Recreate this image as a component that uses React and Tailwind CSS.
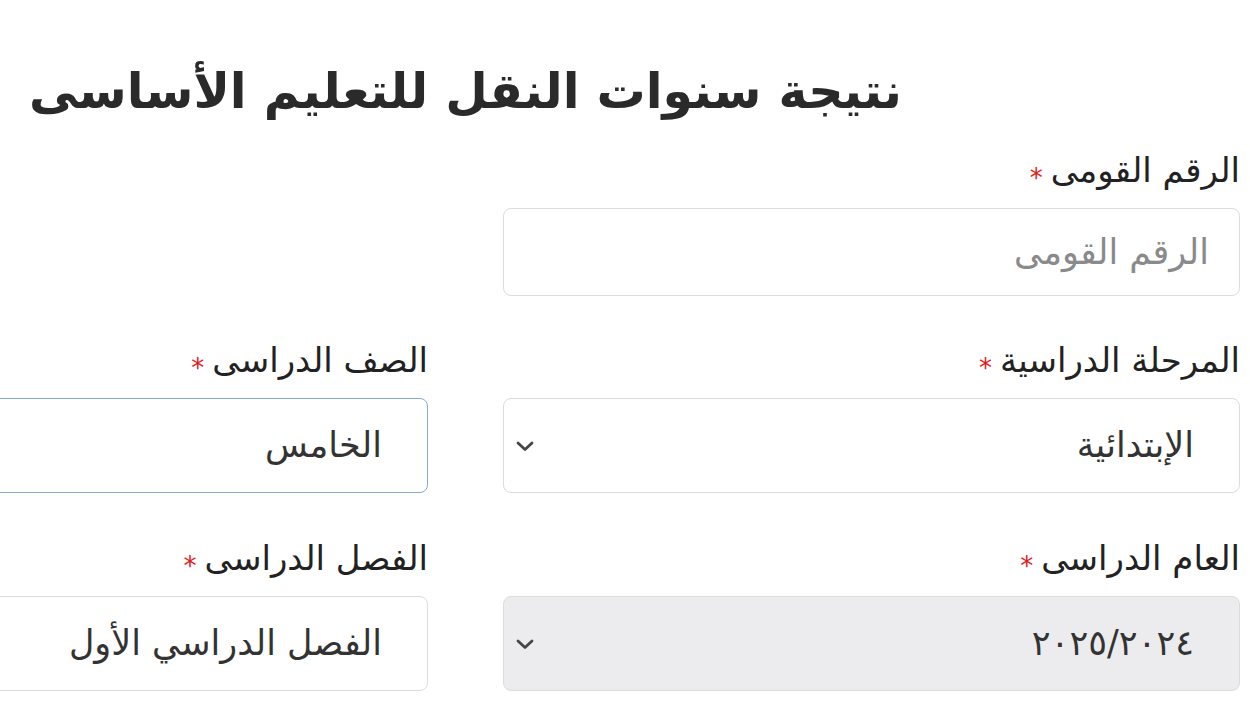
import React from 'react';

const Chevron = () => (
    <svg width="20" height="12" viewBox="0 0 20 12" className="absolute left-[11px] top-1/2 -translate-y-1/2">
        <polyline points="3,3 10,9.5 17,3" fill="none" stroke="#454545" strokeWidth="2.8" strokeLinecap="round" strokeLinejoin="round" />
    </svg>
);

const Label = ({ children }) => (
    <div className="h-12 leading-[48px] mb-[14px] text-[34px] text-[#222] flex items-center gap-2">
        <span>{children}</span>
        <span className="text-[#e02020] text-[26px] leading-none mt-4">*</span>
    </div>
);

const SelectBox = ({ value, gray, focused }) => (
    <div
        className={
            'relative h-[95px] rounded-lg border flex items-center pr-[45px] text-[35px] text-[#333] ' +
            (gray ? 'bg-[#ececee] ' : 'bg-white ') +
            (focused ? 'border-[#86aad3]' : 'border-[#dcdcdc]')
        }
    >
        <span>{value}</span>
        <Chevron />
    </div>
);

export default function App() {
    return (
        <div dir="rtl" className="w-[1250px] h-[720px] overflow-hidden bg-white" style={{ fontFamily: '"DejaVu Sans", "Noto Sans", sans-serif' }}>
            <div className="w-[1549px] mr-[10px]">
                {/* Title */}
                <h1 className="text-center text-[49px] font-bold text-[#2a2a2a] pt-[58px] pb-[20px] leading-[68px]">
                    نتيجة سنوات النقل للتعليم الأساسى
                </h1>

                <div className="grid grid-cols-2 gap-x-[75px]">
                    {/* Row 1 */}
                    <div className="mb-[40px]">
                        <Label>الرقم القومى</Label>
                        <div className="h-[88px] rounded-lg border border-[#dcdcdc] bg-white flex items-center pr-[30px] text-[35px] text-[#8a8a8a]">
                            الرقم القومى
                        </div>
                    </div>
                    <div />

                    {/* Row 2 */}
                    <div className="mb-[41px]">
                        <Label>المرحلة الدراسية</Label>
                        <SelectBox value="الإبتدائية" />
                    </div>
                    <div className="mb-[41px]">
                        <Label>الصف الدراسى</Label>
                        <SelectBox value="الخامس" focused />
                    </div>

                    {/* Row 3 */}
                    <div>
                        <Label>العام الدراسى</Label>
                        <SelectBox value="٢٠٢٥/٢٠٢٤" gray />
                    </div>
                    <div>
                        <Label>الفصل الدراسى</Label>
                        <SelectBox value="الفصل الدراسي الأول" />
                    </div>
                </div>
            </div>
        </div>
    );
}
